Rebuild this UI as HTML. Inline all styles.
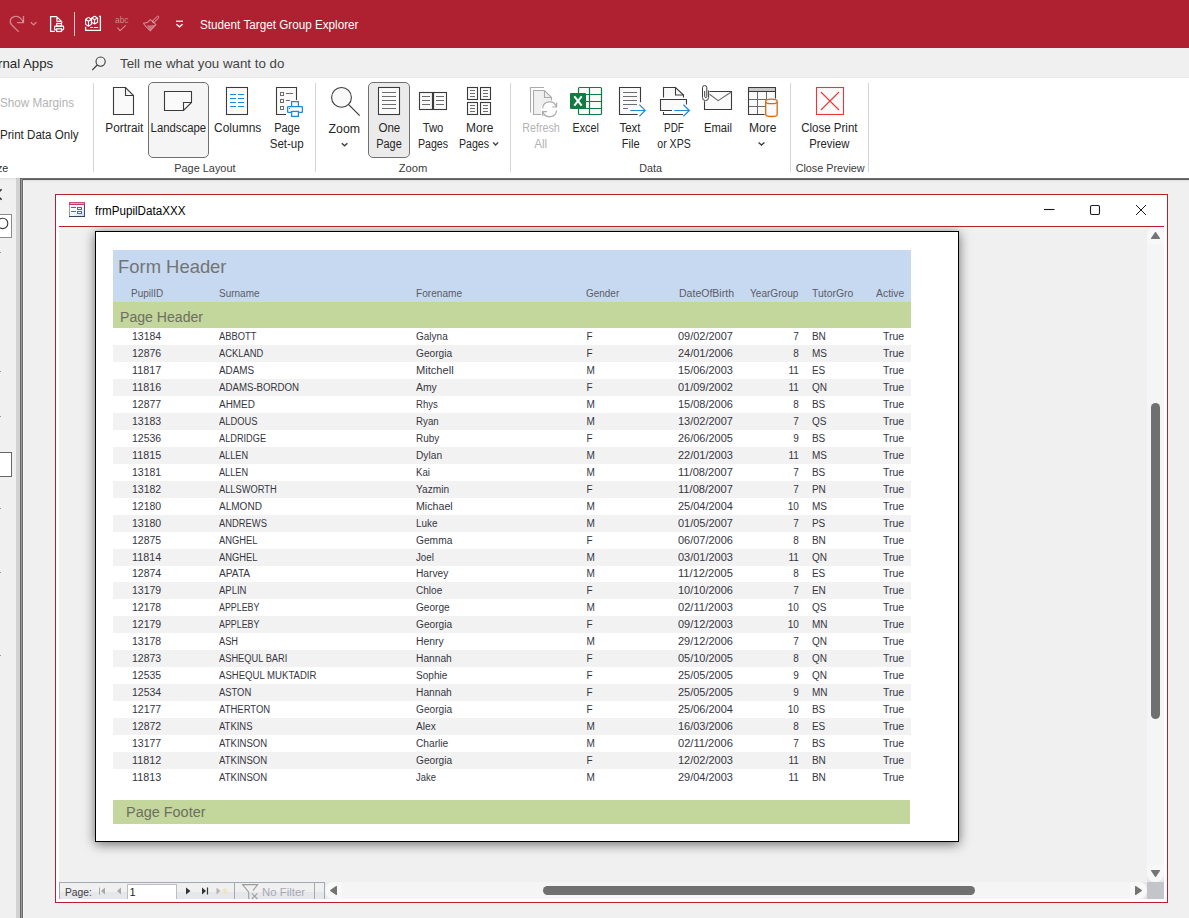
<!DOCTYPE html>
<html><head><meta charset="utf-8"><title>Student Target Group Explorer</title>
<style>
html,body{margin:0;padding:0;}
body{width:1189px;height:918px;overflow:hidden;position:relative;background:#f0f0f0;font-family:"Liberation Sans",sans-serif;}
.t{position:absolute;white-space:pre;line-height:1;}
.r{position:absolute;}
svg{position:absolute;overflow:visible;}
</style></head><body>
<div class="r" style="left:0px;top:0px;width:1189px;height:48px;background:#af2031;"></div>
<span class="t" style="left:200.00px;top:19.00px;font-size:12px;color:#fff;transform:scaleX(0.9751);transform-origin:left top;">Student Target Group Explorer</span>
<div class="r" style="left:0px;top:48px;width:1189px;height:30px;background:#f0f0f0;"></div>
<div class="r" style="left:0px;top:77px;width:1189px;height:1px;background:#e8e8e8;"></div>
<span class="t" style="left:-1.70px;top:57.00px;font-size:13px;color:#262626;transform:scaleX(1.0184);transform-origin:left top;">rnal Apps</span>
<span class="t" style="left:120.20px;top:57.00px;font-size:13px;color:#444;transform:scaleX(1.0248);transform-origin:left top;">Tell me what you want to do</span>
<div class="r" style="left:0px;top:78px;width:1189px;height:100px;background:#fff;"></div>
<div class="r" style="left:20px;top:178px;width:1169px;height:1px;background:#6e6e6e;"></div>
<div class="r" style="left:20px;top:179px;width:1169px;height:1px;background:#5a5a5a;"></div>
<div class="r" style="left:0px;top:178px;width:20px;height:740px;background:#f0f0f0;"></div>
<div class="r" style="left:23px;top:180px;width:1166px;height:738px;background:#f0f0f0;"></div>
<svg style="left:0;top:0" width="200" height="48" viewBox="0 0 200 48" fill="none" stroke-linecap="butt">
<!-- redo (disabled) -->
<path d="M18.8 31.9L11.6 24.7C9.1 22 10 17.6 14.4 16.6C18 15.9 21.2 18.2 23.1 21.9" stroke="rgba(255,255,255,0.46)" stroke-width="1.3"/>
<path d="M23.5 16V22.6H17" stroke="rgba(255,255,255,0.46)" stroke-width="1.3"/>
<path d="M30.8 22.3L33.6 24.9L36.4 22.3" stroke="rgba(255,255,255,0.46)" stroke-width="1.4"/>
<!-- doc + printer -->
<path d="M54.9 31.4H50.6V16.6H56.9" stroke="#fff" stroke-width="1.3"/>
<path d="M56.9 16.9V21.4H61.5Z" stroke="#fff" stroke-width="1.1" stroke-linejoin="bevel"/>
<path d="M61.8 21.4V23" stroke="#fff" stroke-width="1.15"/>
<rect x="56.7" y="23.5" width="4.8" height="2.6" stroke="#fff" stroke-width="1.2"/>
<rect x="54.6" y="26.1" width="9" height="3.7" rx="0.8" stroke="#fff" stroke-width="1.2"/>
<rect x="56.7" y="28.8" width="4.8" height="2.7" fill="#af2031" stroke="#fff" stroke-width="1.2"/>
<!-- separator -->
<path d="M74.5 12V36" stroke="#eac4c9" stroke-width="1"/>
<!-- form icon -->
<path d="M85.6 26.8V30.3H100.4V16.4H99" stroke="#fff" stroke-width="1.3"/>
<path d="M88.5 17.4L91.4 19.2V24.4L88.5 26.3L85.6 24.4V19.2Z M85.6 19.2L88.5 21.2L91.4 19.2 M88.5 21.2V26.3" stroke="#fff" stroke-width="1.1" stroke-linejoin="round"/>
<path d="M94.6 16.2L97.6 17.9V22.3L94.6 24L91.6 22.3V17.9Z M91.6 17.9L94.6 19.7L97.6 17.9 M94.6 19.7V24" stroke="#fff" stroke-width="1.1" stroke-linejoin="round"/>
<path d="M90.3 27.5H92.8M93.8 27.5H98.2" stroke="#fff" stroke-width="1"/>
<!-- abc check disabled -->
<path d="M117.4 27.6L120 30.6L125.8 25.4" stroke="rgba(255,255,255,0.46)" stroke-width="1.1"/>
<!-- brush disabled -->
<path d="M153.6 21.4L157.8 17.2" stroke="rgba(255,255,255,0.46)" stroke-width="3" stroke-linecap="round"/>
<path d="M153.6 21.4L157.8 17.2" stroke="#af2031" stroke-width="1.1" stroke-linecap="round"/>
<path d="M150.4 19.6L156 24.6L150.2 30.8C147.6 28.6 145.2 26 143.4 23.2C146.4 23 148.8 21.8 150.4 19.6Z" stroke="rgba(255,255,255,0.46)" stroke-width="1.1" stroke-linejoin="round"/>
<path d="M146.6 25.4C149.6 25.6 152.6 25 155.6 24.8L150.2 30.6C148.8 29.2 147.6 27.4 146.6 25.4Z" fill="rgba(255,255,255,0.36)" stroke="none"/>
<!-- customize dropdown -->
<path d="M176 21.2H183" stroke="#fff" stroke-width="1.2"/>
<path d="M176.4 24.2L179.5 26.8L182.6 24.2" stroke="#fff" stroke-width="1.3"/>
</svg>
<span class="t" style="left:115.00px;top:16.00px;font-size:9px;color:rgba(255,255,255,0.46);transform:scaleX(0.9303);transform-origin:left top;">abc</span>
<svg style="left:88px;top:52px" width="24" height="24" viewBox="0 0 24 24" fill="none">
<circle cx="12.6" cy="9.6" r="4.6" stroke="#3b3b3b" stroke-width="1.1"/>
<path d="M9.2 13L4.2 18.2" stroke="#3b3b3b" stroke-width="1.2"/>
</svg>
<div class="r" style="left:148px;top:82px;width:61px;height:76px;background:#f5f5f5;box-sizing:border-box;border:1px solid #707070;border-radius:5px;"></div>
<div class="r" style="left:368px;top:82px;width:42px;height:76px;background:#ebebeb;box-sizing:border-box;border:1px solid #707070;border-radius:5px;"></div>
<div class="r" style="left:93px;top:83px;width:1px;height:89px;background:#d5d5d5;"></div>
<div class="r" style="left:315px;top:83px;width:1px;height:89px;background:#d5d5d5;"></div>
<div class="r" style="left:510px;top:83px;width:1px;height:89px;background:#d5d5d5;"></div>
<div class="r" style="left:790px;top:83px;width:1px;height:89px;background:#d5d5d5;"></div>
<div class="r" style="left:868px;top:83px;width:1px;height:89px;background:#d5d5d5;"></div>
<span class="t" style="left:0.30px;top:97.00px;font-size:12px;color:#b3b3b3;transform:scaleX(0.9732);transform-origin:left top;">Show Margins</span>
<span class="t" style="left:0.30px;top:129.00px;font-size:12px;color:#262626;transform:scaleX(0.9660);transform-origin:left top;">Print Data Only</span>
<span class="t" style="left:-3.00px;top:163.00px;font-size:11px;color:#333;transform:scaleX(0.9700);transform-origin:left top;">ze</span>
<span class="t" style="left:174.31px;top:163.00px;font-size:11px;color:#3a3a3a;transform:scaleX(0.9923);transform-origin:center top;">Page Layout</span>
<span class="t" style="left:399.24px;top:163.00px;font-size:11px;color:#3a3a3a;transform:scaleX(1.0171);transform-origin:center top;">Zoom</span>
<span class="t" style="left:639.28px;top:163.00px;font-size:11px;color:#3a3a3a;transform:scaleX(0.9726);transform-origin:center top;">Data</span>
<span class="t" style="left:795.05px;top:163.00px;font-size:11px;color:#3a3a3a;transform:scaleX(0.9814);transform-origin:center top;">Close Preview</span>
<span class="t" style="left:104.56px;top:122.00px;font-size:12px;color:#262626;transform:scaleX(0.9824);transform-origin:center top;">Portrait</span>
<span class="t" style="left:148.94px;top:122.00px;font-size:12px;color:#262626;transform:scaleX(0.9452);transform-origin:center top;">Landscape</span>
<span class="t" style="left:213.72px;top:122.00px;font-size:12px;color:#262626;transform:scaleX(0.9968);transform-origin:center top;">Columns</span>
<span class="t" style="left:273.29px;top:122.00px;font-size:12px;color:#262626;transform:scaleX(0.9170);transform-origin:center top;">Page</span>
<span class="t" style="left:268.82px;top:138.00px;font-size:12px;color:#262626;transform:scaleX(0.9616);transform-origin:center top;">Set-up</span>
<span class="t" style="left:329.36px;top:123.00px;font-size:12px;color:#262626;transform:scaleX(1.0302);transform-origin:center top;">Zoom</span>
<span class="t" style="left:378.16px;top:122.00px;font-size:12px;color:#262626;transform:scaleX(0.9611);transform-origin:center top;">One</span>
<span class="t" style="left:375.39px;top:138.00px;font-size:12px;color:#262626;transform:scaleX(0.9134);transform-origin:center top;">Page</span>
<span class="t" style="left:421.50px;top:122.00px;font-size:12px;color:#262626;transform:scaleX(0.9405);transform-origin:center top;">Two</span>
<span class="t" style="left:415.99px;top:138.00px;font-size:12px;color:#262626;transform:scaleX(0.8875);transform-origin:center top;">Pages</span>
<span class="t" style="left:465.73px;top:122.00px;font-size:12px;color:#262626;transform:scaleX(0.9948);transform-origin:center top;">More</span>
<span class="t" style="left:456.89px;top:138.00px;font-size:12px;color:#262626;transform:scaleX(0.8817);transform-origin:center top;">Pages</span>
<span class="t" style="left:519.59px;top:122.00px;font-size:12px;color:#b3b3b3;transform:scaleX(0.8972);transform-origin:center top;">Refresh</span>
<span class="t" style="left:534.33px;top:138.00px;font-size:12px;color:#b3b3b3;transform:scaleX(0.9747);transform-origin:center top;">All</span>
<span class="t" style="left:570.93px;top:122.00px;font-size:12px;color:#262626;transform:scaleX(0.8928);transform-origin:center top;">Excel</span>
<span class="t" style="left:618.60px;top:122.00px;font-size:12px;color:#262626;transform:scaleX(0.9542);transform-origin:center top;">Text</span>
<span class="t" style="left:620.73px;top:138.00px;font-size:12px;color:#262626;transform:scaleX(0.9205);transform-origin:center top;">File</span>
<span class="t" style="left:661.70px;top:122.00px;font-size:12px;color:#262626;transform:scaleX(0.8250);transform-origin:center top;">PDF</span>
<span class="t" style="left:655.29px;top:138.00px;font-size:12px;color:#262626;transform:scaleX(0.8785);transform-origin:center top;">or XPS</span>
<span class="t" style="left:702.60px;top:122.00px;font-size:12px;color:#262626;transform:scaleX(0.9364);transform-origin:center top;">Email</span>
<span class="t" style="left:748.83px;top:122.00px;font-size:12px;color:#262626;transform:scaleX(1.0058);transform-origin:center top;">More</span>
<span class="t" style="left:800.46px;top:122.00px;font-size:12px;color:#262626;transform:scaleX(0.9593);transform-origin:center top;">Close Print</span>
<span class="t" style="left:808.26px;top:138.00px;font-size:12px;color:#262626;transform:scaleX(0.9372);transform-origin:center top;">Preview</span>
<svg style="left:0;top:0" width="1189" height="180" viewBox="0 0 1189 180"><path d="M113.5 87.5H125.5L133.5 95.5V114.5H113.5Z" fill="#fafafa" stroke="#3b3b3b" stroke-width="1.1" stroke-linejoin="miter"/><path d="M125.5 87.5V95.5H133.5" fill="none" stroke="#3b3b3b" stroke-width="1.1"/><path d="M164.5 91.5H191.5V102.5L183.5 110.5H164.5Z" fill="#fafafa" stroke="#3b3b3b" stroke-width="1.1"/><path d="M191.5 102.5H183.5V110.5" fill="none" stroke="#3b3b3b" stroke-width="1.1"/><rect x="226.5" y="87.5" width="21" height="27" fill="#fff" stroke="#3b3b3b" stroke-width="1.1"/><rect x="228.5" y="89.5" width="17" height="23" fill="#fafafa"/><path d="M230 94.5H236M238 94.5H244" stroke="#1e8ad6" stroke-width="1.1"/><path d="M230 98.5H236M238 98.5H244" stroke="#1e8ad6" stroke-width="1.1"/><path d="M230 102.5H236M238 102.5H244" stroke="#1e8ad6" stroke-width="1.1"/><path d="M230 106.5H236M238 106.5H244" stroke="#1e8ad6" stroke-width="1.1"/><path d="M277 88H296V101H287V114H277Z" fill="#fafafa" stroke="none"/><path d="M286 114.5H276.5V87.5H296.5V100" fill="none" stroke="#3b3b3b" stroke-width="1.1"/><rect x="280.5" y="92.5" width="3" height="3" fill="#fff" stroke="#6d6d6d" stroke-width="1"/><rect x="280.5" y="99.5" width="3" height="3" fill="#fff" stroke="#6d6d6d" stroke-width="1"/><rect x="280.5" y="106.5" width="3" height="3" fill="#fff" stroke="#6d6d6d" stroke-width="1"/><path d="M286 93.5H293M286 100.5H290" stroke="#6d6d6d" stroke-width="1"/><rect x="291.6" y="101.6" width="6.8" height="5" fill="#fafafa" stroke="#1e8ad6" stroke-width="1.25"/><rect x="287.6" y="106.6" width="14.8" height="5.8" rx="0.6" fill="#fafafa" stroke="#1e8ad6" stroke-width="1.25"/><rect x="291.6" y="111.4" width="6.8" height="5" fill="#fafafa" stroke="#1e8ad6" stroke-width="1.25"/><rect x="289" y="108" width="1" height="1" fill="#1e8ad6"/><circle cx="341.5" cy="97.4" r="9.9" fill="#fafafa" stroke="#3b3b3b" stroke-width="1.1"/><path d="M348.7 104.6L359.7 115.6" stroke="#3b3b3b" stroke-width="1.2"/><path d="M341.8 143.2L344.6 145.8L347.4 143.2" fill="none" stroke="#3b3b3b" stroke-width="1.3"/><rect x="378.5" y="87.5" width="21" height="27" fill="#fff" stroke="#3b3b3b" stroke-width="1.1"/><rect x="380.5" y="89.5" width="17" height="23" fill="#fafafa"/><path d="M382 92.5H396" stroke="#6d6d6d" stroke-width="1"/><path d="M382 96.5H396" stroke="#6d6d6d" stroke-width="1"/><path d="M382 100.5H396" stroke="#6d6d6d" stroke-width="1"/><path d="M382 104.5H396" stroke="#6d6d6d" stroke-width="1"/><path d="M382 108.5H396" stroke="#6d6d6d" stroke-width="1"/><rect x="419.5" y="92.5" width="27" height="17" fill="#fafafa" stroke="#3b3b3b" stroke-width="1.1"/><path d="M433 92.5V109.5" stroke="#3b3b3b" stroke-width="2.2"/><path d="M422 96.5H430M436 96.5H444" stroke="#6d6d6d" stroke-width="1"/><path d="M422 100.5H430M436 100.5H444" stroke="#6d6d6d" stroke-width="1"/><path d="M422 104.5H430M436 104.5H444" stroke="#6d6d6d" stroke-width="1"/><rect x="467.5" y="87.5" width="10" height="12" fill="#fafafa" stroke="#3b3b3b" stroke-width="1.1"/><path d="M470.0 90.5H475.0" stroke="#6d6d6d" stroke-width="1"/><path d="M470.0 93.5H475.0" stroke="#6d6d6d" stroke-width="1"/><path d="M470.0 96.5H475.0" stroke="#6d6d6d" stroke-width="1"/><rect x="480.5" y="87.5" width="10" height="12" fill="#fafafa" stroke="#3b3b3b" stroke-width="1.1"/><path d="M483.0 90.5H488.0" stroke="#6d6d6d" stroke-width="1"/><path d="M483.0 93.5H488.0" stroke="#6d6d6d" stroke-width="1"/><path d="M483.0 96.5H488.0" stroke="#6d6d6d" stroke-width="1"/><rect x="467.5" y="102.5" width="10" height="12" fill="#fafafa" stroke="#3b3b3b" stroke-width="1.1"/><path d="M470.0 105.5H475.0" stroke="#6d6d6d" stroke-width="1"/><path d="M470.0 108.5H475.0" stroke="#6d6d6d" stroke-width="1"/><path d="M470.0 111.5H475.0" stroke="#6d6d6d" stroke-width="1"/><rect x="480.5" y="102.5" width="10" height="12" fill="#fafafa" stroke="#3b3b3b" stroke-width="1.1"/><path d="M483.0 105.5H488.0" stroke="#6d6d6d" stroke-width="1"/><path d="M483.0 108.5H488.0" stroke="#6d6d6d" stroke-width="1"/><path d="M483.0 111.5H488.0" stroke="#6d6d6d" stroke-width="1"/><path d="M493 142.4L495.6 145L498.2 142.4" fill="none" stroke="#3b3b3b" stroke-width="1.3"/><path d="M530.5 112.6V87.5H544" fill="none" stroke="#ababab" stroke-width="1.1"/><path d="M534 91H544.4L551 97.6V114H534Z" fill="#f0f0f0" stroke="none"/><path d="M541 114.5H533.5V90.5H544.5L551.5 97.5V100.4" fill="none" stroke="#ababab" stroke-width="1.1"/><path d="M544.5 90.5V97.5H551.5" fill="none" stroke="#ababab" stroke-width="1.1"/><circle cx="549.6" cy="109.3" r="8.6" fill="#fff" stroke="none"/><path d="M542.6 108.2A7 7 0 0 1 556.2 106.6" fill="none" stroke="#ababab" stroke-width="1.2"/><path d="M556.6 110.4A7 7 0 0 1 543 112" fill="none" stroke="#ababab" stroke-width="1.2"/><path d="M556.6 102.6V107H552.2" fill="none" stroke="#ababab" stroke-width="1.2"/><path d="M542.6 116V111.6H547" fill="none" stroke="#ababab" stroke-width="1.2"/><rect x="578.5" y="87.5" width="23" height="27" rx="1" fill="#fafafa" stroke="#107c41" stroke-width="1.2"/><path d="M589.5 87.5V114.5M578.5 94.5H601.5M578.5 101.5H601.5M578.5 108.5H601.5" stroke="#107c41" stroke-width="1.2" fill="none"/><rect x="570" y="93" width="16" height="16" rx="1" fill="#107c41"/><path d="M574.3 96.4L581.7 105.7M581.7 96.4L574.3 105.7" stroke="#fff" stroke-width="2.1" fill="none"/><path d="M620 88H640V104H637V114H620Z" fill="#fafafa" stroke="none"/><path d="M637.7 114.5H619.5V87.5H640.5V102.3" fill="none" stroke="#3b3b3b" stroke-width="1.1"/><path d="M623 92.5H637" stroke="#6d6d6d" stroke-width="1"/><path d="M623 96.5H637" stroke="#6d6d6d" stroke-width="1"/><path d="M623 100.5H637" stroke="#6d6d6d" stroke-width="1"/><path d="M623 104.5H637" stroke="#6d6d6d" stroke-width="1"/><path d="M623 108.5H628" stroke="#6d6d6d" stroke-width="1"/><path d="M630.3 110.5H645M639.4 104.7L645.2 110.5L639.4 116.3" fill="none" stroke="#1e8ad6" stroke-width="1.2"/><path d="M663.5 97.5V87.5H675.5L683.5 95V97.5" fill="#fafafa" stroke="#3b3b3b" stroke-width="1.1"/><path d="M675.5 87.5V95H683.5" fill="none" stroke="#3b3b3b" stroke-width="1.1"/><path d="M661 100H686V106H674V110H661Z" fill="#fafafa" stroke="none"/><path d="M672 110.5H660.5V99.5H686.5V104.6" fill="none" stroke="#3b3b3b" stroke-width="1.1"/><path d="M663.5 112V114.5H683" fill="none" stroke="#3b3b3b" stroke-width="1.1"/><path d="M674.2 110.5H689.2M683.4 104.7L689.4 110.5L683.4 116.3" fill="none" stroke="#1e8ad6" stroke-width="1.2"/><path d="M705 101H709V92H731V109H705Z" fill="#fafafa" stroke="none"/><path d="M709.5 91.5H731.5V109.5H704.5V101.2" fill="none" stroke="#3b3b3b" stroke-width="1.1"/><path d="M709.6 94.2L718.1 100.6L731.3 92" fill="none" stroke="#6d6d6d" stroke-width="1.1"/><path d="M702.5 97.4V88A2.9 2.9 0 0 1 708.3 88V97.6A2.9 2.9 0 0 1 702.5 97.6Z" fill="#fff" stroke="none"/><path d="M708.6 90.4V97.5A3.05 3.05 0 0 1 702.5 97.5V87.7A2.15 2.15 0 0 1 706.8 87.7V96.5A1.05 1.05 0 0 1 704.7 96.5V91" fill="none" stroke="#3b3b3b" stroke-width="1"/><rect x="748.5" y="87.5" width="27" height="27" fill="#fafafa" stroke="none"/><rect x="748.5" y="87.5" width="27" height="3.5" fill="#c8c8c8" stroke="none"/><path d="M757.5 91.5V114M766.5 91.5V100M748.5 99.5H766M748.5 106.5H766" stroke="#6d6d6d" stroke-width="1" fill="none"/><path d="M764.6 114.5H748.5V87.5H775.5V98.6M748.5 91.5H775.5" fill="none" stroke="#3b3b3b" stroke-width="1.1"/><path d="M765.7 101.4V114.4C765.7 117.2 777.2 117.2 777.2 114.4V101.4" fill="#fafafa" stroke="#d86a0d" stroke-width="1.3"/><ellipse cx="771.45" cy="101.4" rx="5.75" ry="2.2" fill="#fafafa" stroke="#d86a0d" stroke-width="1.3"/><path d="M758.6 142.4L761.5 145.1L764.4 142.4" fill="none" stroke="#3b3b3b" stroke-width="1.3"/><rect x="816.5" y="87.5" width="27" height="27" fill="#fafafa" stroke="#e8373a" stroke-width="1.1"/><path d="M820.9 92L839 110M839 92L820.9 110" stroke="#e8373a" stroke-width="1.1" fill="none"/></svg>
<div class="r" style="left:0px;top:178px;width:20px;height:1px;background:#e2e2e2;"></div>
<div class="r" style="left:0px;top:179px;width:20px;height:1px;background:#e9e9e9;"></div>
<div class="r" style="left:0px;top:180px;width:20px;height:1px;background:#eeeeee;"></div>
<div class="r" style="left:16px;top:178px;width:4px;height:740px;background:#d2d2d2;"></div>
<div class="r" style="left:16px;top:178px;width:4px;height:1px;background:#c8c8c8;"></div>
<div class="r" style="left:20px;top:178px;width:1px;height:740px;background:#656565;"></div>
<div class="r" style="left:21px;top:179px;width:1px;height:739px;background:#9c9c9c;"></div>
<div class="r" style="left:22px;top:179px;width:1px;height:739px;background:#696969;"></div>
<div class="r" style="left:23px;top:180px;width:1px;height:738px;background:#f8f8f8;"></div>
<div class="r" style="left:23px;top:180px;width:1166px;height:1px;background:#e4e4e4;"></div>
<div class="r" style="left:24px;top:181px;width:1165px;height:1px;background:#ebebeb;"></div>
<div class="r" style="left:24px;top:182px;width:1165px;height:1px;background:#eeeeee;"></div>
<svg style="left:0;top:186px" width="8" height="16" viewBox="0 0 8 16"><path d="M1.6 3.2L-3.8 8.5L1.6 13.8" fill="none" stroke="#333" stroke-width="1.6"/></svg>
<div class="r" style="left:-1px;top:214px;width:13px;height:24px;background:#fff;box-sizing:border-box;border:1px solid #8a8a8a;"></div>
<svg style="left:0;top:214px" width="12" height="24" viewBox="0 0 12 24"><circle cx="2.6" cy="9.4" r="5.2" fill="none" stroke="#3a3a3a" stroke-width="1.1"/></svg>
<div class="r" style="left:-1px;top:452px;width:13px;height:25px;background:#fff;box-sizing:border-box;border:1px solid #666;"></div>
<div class="r" style="left:0px;top:252px;width:1px;height:1px;background:#9a9a9a;"></div>
<div class="r" style="left:0px;top:371px;width:1px;height:1px;background:#9a9a9a;"></div>
<div class="r" style="left:0px;top:416px;width:1px;height:1px;background:#9a9a9a;"></div>
<div class="r" style="left:0px;top:508px;width:1px;height:1px;background:#9a9a9a;"></div>
<div class="r" style="left:0px;top:572px;width:1px;height:1px;background:#9a9a9a;"></div>
<div class="r" style="left:0px;top:655px;width:1px;height:1px;background:#9a9a9a;"></div>
<div class="r" style="left:55px;top:194px;width:1113px;height:709px;background:#fff;box-sizing:border-box;border:1px solid #b5212f;"></div>
<div class="r" style="left:59px;top:226px;width:1105px;height:1px;background:#b5212f;"></div>
<div class="r" style="left:59px;top:227px;width:1105px;height:655px;background:#f0f0f0;"></div>
<span class="t" style="left:95.00px;top:205.00px;font-size:12px;color:#000;transform:scaleX(0.9682);transform-origin:left top;">frmPupilDataXXX</span>
<svg style="left:69px;top:202px" width="16" height="15" viewBox="0 0 16 15" shape-rendering="crispEdges">
<defs><linearGradient id="fg" x1="0" y1="0" x2="1" y2="1"><stop offset="0" stop-color="#ffffff"/><stop offset="0.5" stop-color="#f4f8ff"/><stop offset="1" stop-color="#c4d4f6"/></linearGradient></defs>
<rect x="0" y="3" width="16" height="12" fill="url(#fg)"/>
<rect x="0" y="0" width="16" height="3" fill="#c4366c"/>
<rect x="1" y="1" width="14" height="1" fill="#e9a4bd"/>
<rect x="0" y="0" width="16" height="1" fill="#cf4e80"/>
<rect x="0" y="3" width="1" height="12" fill="#8d9cba"/>
<rect x="15" y="3" width="1" height="12" fill="#3a4c74"/>
<rect x="0" y="14" width="16" height="1" fill="#2f4468"/>
<rect x="2" y="5" width="5" height="1" fill="#5068a8"/>
<rect x="2" y="9" width="5" height="1" fill="#5068a8"/>
<rect x="8" y="5" width="5" height="3" fill="#5c6a92"/>
<rect x="9" y="6" width="3" height="1" fill="#f4f6fc"/>
<rect x="8" y="9" width="5" height="3" fill="#5c6a92"/>
<rect x="9" y="10" width="3" height="1" fill="#f4f6fc"/>
</svg>
<svg style="left:1040px;top:200px" width="120" height="20" viewBox="0 0 120 20"><path d="M4 9.5H14.5" stroke="#1a1a1a" stroke-width="1.1" fill="none"/><rect x="50.5" y="5.5" width="9" height="9" rx="1.5" fill="none" stroke="#1a1a1a" stroke-width="1.1"/><path d="M96 5L106 15M106 5L96 15" stroke="#1a1a1a" stroke-width="1" fill="none"/></svg>
<div class="r" style="left:1147px;top:227px;width:17px;height:655px;background:#f5f5f5;"></div>
<div class="r" style="left:1147px;top:227px;width:17px;height:9px;background:#efefef;"></div>
<div class="r" style="left:1147px;top:227px;width:17px;height:17px;background:#f8f8f8;border-radius:8px 8px 0 0;"></div>
<div class="r" style="left:1147px;top:873px;width:17px;height:9px;background:#e6e6e8;"></div>
<div class="r" style="left:1147px;top:865px;width:17px;height:17px;background:#f8f8f8;border-radius:0 0 8px 8px;"></div>
<div class="r" style="left:1151px;top:403px;width:9px;height:316px;background:#707070;border-radius:4.5px;"></div>
<svg style="left:1147px;top:227px" width="17" height="17" viewBox="0 0 17 17"><path d="M4.6 11.4L8.5 5.6L12.4 11.4Z" fill="#757575" stroke="#757575" stroke-width="1.2" stroke-linejoin="round"/></svg>
<svg style="left:1147px;top:865px" width="17" height="17" viewBox="0 0 17 17"><path d="M4.6 5.6L8.5 11.4L12.4 5.6Z" fill="#757575" stroke="#757575" stroke-width="1.2" stroke-linejoin="round"/></svg>
<div class="r" style="left:325px;top:882px;width:822px;height:17px;background:#f5f5f5;"></div>
<div class="r" style="left:325px;top:882px;width:8px;height:17px;background:#e9eaec;"></div>
<div class="r" style="left:325px;top:882px;width:17px;height:17px;background:#f8f8f8;border-radius:8px 0 0 8px;"></div>
<div class="r" style="left:1138px;top:882px;width:9px;height:17px;background:#e6e6e8;"></div>
<div class="r" style="left:1130px;top:882px;width:17px;height:17px;background:#f8f8f8;border-radius:0 8px 8px 0;"></div>
<div class="r" style="left:543px;top:886px;width:432px;height:9px;background:#707070;border-radius:4.5px;"></div>
<svg style="left:325px;top:882px" width="17" height="17" viewBox="0 0 17 17"><path d="M11.4 4.6L5.6 8.5L11.4 12.4Z" fill="#757575" stroke="#757575" stroke-width="1.2" stroke-linejoin="round"/></svg>
<svg style="left:1130px;top:882px" width="17" height="17" viewBox="0 0 17 17"><path d="M5.6 4.6L11.4 8.5L5.6 12.4Z" fill="#757575" stroke="#757575" stroke-width="1.2" stroke-linejoin="round"/></svg>
<div class="r" style="left:1147px;top:882px;width:17px;height:17px;background:#c4c5c9;"></div>
<div class="r" style="left:59px;top:882px;width:266px;height:17px;background:#f0f0f0;"></div>
<div class="r" style="left:60px;top:892px;width:264px;height:7px;background:#e5e7ea;"></div>
<div class="r" style="left:59px;top:882px;width:266px;height:1px;background:#a3a9b3;"></div>
<div class="r" style="left:59px;top:882px;width:1px;height:17px;background:#a3a9b3;"></div>
<div class="r" style="left:324px;top:882px;width:1px;height:17px;background:#a3a9b3;"></div>
<span class="t" style="left:64.50px;top:887.00px;font-size:11px;color:#3c3c46;transform:scaleX(0.9323);transform-origin:left top;">Page:</span>
<svg style="left:95px;top:884.4px" width="140" height="14" viewBox="0 0 140 14"><path d="M4.5 3.5V10.5" stroke="#a9a9a9" stroke-width="1"/><path d="M10 3.5L6 7L10 10.5Z" fill="#a9a9a9"/><path d="M26 3.5L22 7L26 10.5Z" fill="#a9a9a9"/><path d="M91 3.5L95.5 7L91 10.5Z" fill="#333"/><path d="M107 3.5L111 7L107 10.5Z" fill="#333"/><path d="M112.5 3.5V10.5" stroke="#333" stroke-width="1.2"/><path d="M121.5 3.5L125.5 7L121.5 10.5Z" fill="#b4b4b4"/><path d="M130 4v6M127 7h6M128 5l4 4M132 5l-4 4" stroke="#f1e1b4" stroke-width="1"/></svg>
<div class="r" style="left:127px;top:884px;width:50px;height:15px;background:#fff;box-sizing:border-box;border:1px solid #b9bdc4;border-bottom:none;"></div>
<span class="t" style="left:129.60px;top:887.00px;font-size:11px;color:#1a1a2a;transform:scaleX(1.0000);transform-origin:left top;">1</span>
<div class="r" style="left:234px;top:883px;width:1px;height:16px;background:#a3a9b3;"></div>
<div class="r" style="left:314px;top:883px;width:1px;height:16px;background:#a3a9b3;"></div>
<svg style="left:241px;top:883px" width="20" height="16" viewBox="0 0 20 16"><path d="M7.7 16V9.2L1.6 1.6H16.6L12 7.6" fill="none" stroke="#9c9c9c" stroke-width="1.1"/><path d="M10.8 10.3L16.4 16M16.4 10.3L10.8 16" stroke="#9c9c9c" stroke-width="1.1"/></svg>
<span class="t" style="left:261.50px;top:887.00px;font-size:11px;color:#a7a7b5;transform:scaleX(1.0346);transform-origin:left top;">No Filter</span>
<div class="r" style="left:59px;top:227px;width:1088px;height:655px;overflow:hidden"><div class="r" style="left:36px;top:4px;width:864px;height:611px;background:#fff;box-sizing:border-box;border:1px solid #000;box-shadow:0 2px 11px 0 rgba(0,0,0,0.56);"></div></div>
<div class="r" style="left:113px;top:250px;width:798px;height:52px;background:#c6d9f0;"></div>
<div class="r" style="left:113px;top:302px;width:798px;height:26px;background:#c3d69b;"></div>
<div class="r" style="left:113px;top:800px;width:797px;height:24px;background:#c3d69b;"></div>
<span class="t" style="left:117.50px;top:258.00px;font-size:18.5px;color:#747474;transform:scaleX(0.9956);transform-origin:left top;">Form Header</span>
<span class="t" style="left:120.30px;top:310.00px;font-size:14px;color:#6e6e62;transform:scaleX(1.0060);transform-origin:left top;">Page Header</span>
<span class="t" style="left:125.60px;top:805.00px;font-size:14px;color:#6e6e62;transform:scaleX(1.0318);transform-origin:left top;">Page Footer</span>
<span class="t" style="left:131.40px;top:289.00px;font-size:10px;color:#5c5c66;transform:scaleX(0.9988);transform-origin:left top;">PupilID</span>
<span class="t" style="left:219.00px;top:289.00px;font-size:10px;color:#5c5c66;transform:scaleX(0.9981);transform-origin:left top;">Surname</span>
<span class="t" style="left:416.30px;top:289.00px;font-size:10px;color:#5c5c66;transform:scaleX(1.0136);transform-origin:left top;">Forename</span>
<span class="t" style="left:586.30px;top:289.00px;font-size:10px;color:#5c5c66;transform:scaleX(0.9953);transform-origin:left top;">Gender</span>
<span class="t" style="left:678.50px;top:289.00px;font-size:10px;color:#5c5c66;transform:scaleX(1.0528);transform-origin:left top;">DateOfBirth</span>
<span class="t" style="left:750.40px;top:289.00px;font-size:10px;color:#5c5c66;transform:scaleX(1.0083);transform-origin:left top;">YearGroup</span>
<span class="t" style="left:812.20px;top:289.00px;font-size:10px;color:#5c5c66;transform:scaleX(1.0419);transform-origin:left top;">TutorGro</span>
<span class="t" style="left:876.00px;top:289.00px;font-size:10px;color:#5c5c66;transform:scaleX(1.0392);transform-origin:left top;">Active</span>
<span class="t" style="left:131.90px;top:332.00px;font-size:10px;color:#36363f;transform:scaleX(1.0477);transform-origin:left top;">13184</span>
<span class="t" style="left:219.20px;top:332.00px;font-size:10px;color:#36363f;transform:scaleX(0.9380);transform-origin:left top;">ABBOTT</span>
<span class="t" style="left:416.20px;top:332.00px;font-size:10px;color:#36363f;transform:scaleX(1.0004);transform-origin:left top;">Galyna</span>
<span class="t" style="left:586.50px;top:332.00px;font-size:10px;color:#36363f;transform:scaleX(1.0000);transform-origin:left top;">F</span>
<span class="t" style="left:678.30px;top:332.00px;font-size:10px;color:#36363f;transform:scaleX(1.0958);transform-origin:left top;">09/02/2007</span>
<span class="t" style="left:793.34px;top:332.00px;font-size:10px;color:#36363f;transform:scaleX(1.0000);transform-origin:right top;">7</span>
<span class="t" style="left:811.90px;top:332.00px;font-size:10px;color:#36363f;transform:scaleX(1.0000);transform-origin:left top;">BN</span>
<span class="t" style="left:884.31px;top:332.00px;font-size:10px;color:#36363f;transform:scaleX(1.0500);transform-origin:right top;">True</span>
<div class="r" style="left:113px;top:345px;width:798px;height:17px;background:#f2f2f2;"></div>
<span class="t" style="left:131.90px;top:349.00px;font-size:10px;color:#36363f;transform:scaleX(1.0477);transform-origin:left top;">12876</span>
<span class="t" style="left:219.20px;top:349.00px;font-size:10px;color:#36363f;transform:scaleX(0.9350);transform-origin:left top;">ACKLAND</span>
<span class="t" style="left:416.20px;top:349.00px;font-size:10px;color:#36363f;transform:scaleX(1.0140);transform-origin:left top;">Georgia</span>
<span class="t" style="left:586.50px;top:349.00px;font-size:10px;color:#36363f;transform:scaleX(1.0000);transform-origin:left top;">F</span>
<span class="t" style="left:678.30px;top:349.00px;font-size:10px;color:#36363f;transform:scaleX(1.0958);transform-origin:left top;">24/01/2006</span>
<span class="t" style="left:793.34px;top:349.00px;font-size:10px;color:#36363f;transform:scaleX(1.0000);transform-origin:right top;">8</span>
<span class="t" style="left:811.90px;top:349.00px;font-size:10px;color:#36363f;transform:scaleX(1.0000);transform-origin:left top;">MS</span>
<span class="t" style="left:884.31px;top:349.00px;font-size:10px;color:#36363f;transform:scaleX(1.0500);transform-origin:right top;">True</span>
<span class="t" style="left:131.90px;top:366.00px;font-size:10px;color:#36363f;transform:scaleX(1.0765);transform-origin:left top;">11817</span>
<span class="t" style="left:219.20px;top:366.00px;font-size:10px;color:#36363f;transform:scaleX(0.9865);transform-origin:left top;">ADAMS</span>
<span class="t" style="left:416.20px;top:366.00px;font-size:10px;color:#36363f;transform:scaleX(1.1111);transform-origin:left top;">Mitchell</span>
<span class="t" style="left:586.50px;top:366.00px;font-size:10px;color:#36363f;transform:scaleX(1.0000);transform-origin:left top;">M</span>
<span class="t" style="left:678.30px;top:366.00px;font-size:10px;color:#36363f;transform:scaleX(1.0958);transform-origin:left top;">15/06/2003</span>
<span class="t" style="left:788.52px;top:366.00px;font-size:10px;color:#36363f;transform:scaleX(1.0000);transform-origin:right top;">11</span>
<span class="t" style="left:811.90px;top:366.00px;font-size:10px;color:#36363f;transform:scaleX(1.0000);transform-origin:left top;">ES</span>
<span class="t" style="left:884.31px;top:366.00px;font-size:10px;color:#36363f;transform:scaleX(1.0500);transform-origin:right top;">True</span>
<div class="r" style="left:113px;top:379px;width:798px;height:17px;background:#f2f2f2;"></div>
<span class="t" style="left:131.90px;top:383.00px;font-size:10px;color:#36363f;transform:scaleX(1.0765);transform-origin:left top;">11816</span>
<span class="t" style="left:219.20px;top:383.00px;font-size:10px;color:#36363f;transform:scaleX(0.9668);transform-origin:left top;">ADAMS-BORDON</span>
<span class="t" style="left:416.20px;top:383.00px;font-size:10px;color:#36363f;transform:scaleX(1.0390);transform-origin:left top;">Amy</span>
<span class="t" style="left:586.50px;top:383.00px;font-size:10px;color:#36363f;transform:scaleX(1.0000);transform-origin:left top;">F</span>
<span class="t" style="left:678.30px;top:383.00px;font-size:10px;color:#36363f;transform:scaleX(1.0958);transform-origin:left top;">01/09/2002</span>
<span class="t" style="left:788.52px;top:383.00px;font-size:10px;color:#36363f;transform:scaleX(1.0000);transform-origin:right top;">11</span>
<span class="t" style="left:811.90px;top:383.00px;font-size:10px;color:#36363f;transform:scaleX(1.0000);transform-origin:left top;">QN</span>
<span class="t" style="left:884.31px;top:383.00px;font-size:10px;color:#36363f;transform:scaleX(1.0500);transform-origin:right top;">True</span>
<span class="t" style="left:131.90px;top:400.00px;font-size:10px;color:#36363f;transform:scaleX(1.0477);transform-origin:left top;">12877</span>
<span class="t" style="left:219.20px;top:400.00px;font-size:10px;color:#36363f;transform:scaleX(0.9943);transform-origin:left top;">AHMED</span>
<span class="t" style="left:416.20px;top:400.00px;font-size:10px;color:#36363f;transform:scaleX(0.9527);transform-origin:left top;">Rhys</span>
<span class="t" style="left:586.50px;top:400.00px;font-size:10px;color:#36363f;transform:scaleX(1.0000);transform-origin:left top;">M</span>
<span class="t" style="left:678.30px;top:400.00px;font-size:10px;color:#36363f;transform:scaleX(1.0958);transform-origin:left top;">15/08/2006</span>
<span class="t" style="left:793.34px;top:400.00px;font-size:10px;color:#36363f;transform:scaleX(1.0000);transform-origin:right top;">8</span>
<span class="t" style="left:811.90px;top:400.00px;font-size:10px;color:#36363f;transform:scaleX(1.0000);transform-origin:left top;">BS</span>
<span class="t" style="left:884.31px;top:400.00px;font-size:10px;color:#36363f;transform:scaleX(1.0500);transform-origin:right top;">True</span>
<div class="r" style="left:113px;top:413px;width:798px;height:17px;background:#f2f2f2;"></div>
<span class="t" style="left:131.90px;top:417.00px;font-size:10px;color:#36363f;transform:scaleX(1.0477);transform-origin:left top;">13183</span>
<span class="t" style="left:219.20px;top:417.00px;font-size:10px;color:#36363f;transform:scaleX(0.9329);transform-origin:left top;">ALDOUS</span>
<span class="t" style="left:416.20px;top:417.00px;font-size:10px;color:#36363f;transform:scaleX(0.9724);transform-origin:left top;">Ryan</span>
<span class="t" style="left:586.50px;top:417.00px;font-size:10px;color:#36363f;transform:scaleX(1.0000);transform-origin:left top;">M</span>
<span class="t" style="left:678.30px;top:417.00px;font-size:10px;color:#36363f;transform:scaleX(1.0958);transform-origin:left top;">13/02/2007</span>
<span class="t" style="left:793.34px;top:417.00px;font-size:10px;color:#36363f;transform:scaleX(1.0000);transform-origin:right top;">7</span>
<span class="t" style="left:811.90px;top:417.00px;font-size:10px;color:#36363f;transform:scaleX(1.0000);transform-origin:left top;">QS</span>
<span class="t" style="left:884.31px;top:417.00px;font-size:10px;color:#36363f;transform:scaleX(1.0500);transform-origin:right top;">True</span>
<span class="t" style="left:131.90px;top:434.00px;font-size:10px;color:#36363f;transform:scaleX(1.0477);transform-origin:left top;">12536</span>
<span class="t" style="left:219.20px;top:434.00px;font-size:10px;color:#36363f;transform:scaleX(0.9198);transform-origin:left top;">ALDRIDGE</span>
<span class="t" style="left:416.20px;top:434.00px;font-size:10px;color:#36363f;transform:scaleX(0.9948);transform-origin:left top;">Ruby</span>
<span class="t" style="left:586.50px;top:434.00px;font-size:10px;color:#36363f;transform:scaleX(1.0000);transform-origin:left top;">F</span>
<span class="t" style="left:678.30px;top:434.00px;font-size:10px;color:#36363f;transform:scaleX(1.0958);transform-origin:left top;">26/06/2005</span>
<span class="t" style="left:793.34px;top:434.00px;font-size:10px;color:#36363f;transform:scaleX(1.0000);transform-origin:right top;">9</span>
<span class="t" style="left:811.90px;top:434.00px;font-size:10px;color:#36363f;transform:scaleX(1.0000);transform-origin:left top;">BS</span>
<span class="t" style="left:884.31px;top:434.00px;font-size:10px;color:#36363f;transform:scaleX(1.0500);transform-origin:right top;">True</span>
<div class="r" style="left:113px;top:447px;width:798px;height:17px;background:#f2f2f2;"></div>
<span class="t" style="left:131.90px;top:451.00px;font-size:10px;color:#36363f;transform:scaleX(1.0765);transform-origin:left top;">11815</span>
<span class="t" style="left:219.20px;top:451.00px;font-size:10px;color:#36363f;transform:scaleX(0.9169);transform-origin:left top;">ALLEN</span>
<span class="t" style="left:416.20px;top:451.00px;font-size:10px;color:#36363f;transform:scaleX(1.0212);transform-origin:left top;">Dylan</span>
<span class="t" style="left:586.50px;top:451.00px;font-size:10px;color:#36363f;transform:scaleX(1.0000);transform-origin:left top;">M</span>
<span class="t" style="left:678.30px;top:451.00px;font-size:10px;color:#36363f;transform:scaleX(1.0958);transform-origin:left top;">22/01/2003</span>
<span class="t" style="left:788.52px;top:451.00px;font-size:10px;color:#36363f;transform:scaleX(1.0000);transform-origin:right top;">11</span>
<span class="t" style="left:811.90px;top:451.00px;font-size:10px;color:#36363f;transform:scaleX(1.0000);transform-origin:left top;">MS</span>
<span class="t" style="left:884.31px;top:451.00px;font-size:10px;color:#36363f;transform:scaleX(1.0500);transform-origin:right top;">True</span>
<span class="t" style="left:131.90px;top:468.00px;font-size:10px;color:#36363f;transform:scaleX(1.0477);transform-origin:left top;">13181</span>
<span class="t" style="left:219.20px;top:468.00px;font-size:10px;color:#36363f;transform:scaleX(0.9169);transform-origin:left top;">ALLEN</span>
<span class="t" style="left:416.20px;top:468.00px;font-size:10px;color:#36363f;transform:scaleX(0.9670);transform-origin:left top;">Kai</span>
<span class="t" style="left:586.50px;top:468.00px;font-size:10px;color:#36363f;transform:scaleX(1.0000);transform-origin:left top;">M</span>
<span class="t" style="left:678.30px;top:468.00px;font-size:10px;color:#36363f;transform:scaleX(1.1123);transform-origin:left top;">11/08/2007</span>
<span class="t" style="left:793.34px;top:468.00px;font-size:10px;color:#36363f;transform:scaleX(1.0000);transform-origin:right top;">7</span>
<span class="t" style="left:811.90px;top:468.00px;font-size:10px;color:#36363f;transform:scaleX(1.0000);transform-origin:left top;">BS</span>
<span class="t" style="left:884.31px;top:468.00px;font-size:10px;color:#36363f;transform:scaleX(1.0500);transform-origin:right top;">True</span>
<div class="r" style="left:113px;top:481px;width:798px;height:17px;background:#f2f2f2;"></div>
<span class="t" style="left:131.90px;top:485.00px;font-size:10px;color:#36363f;transform:scaleX(1.0477);transform-origin:left top;">13182</span>
<span class="t" style="left:219.20px;top:485.00px;font-size:10px;color:#36363f;transform:scaleX(0.9290);transform-origin:left top;">ALLSWORTH</span>
<span class="t" style="left:416.20px;top:485.00px;font-size:10px;color:#36363f;transform:scaleX(1.0134);transform-origin:left top;">Yazmin</span>
<span class="t" style="left:586.50px;top:485.00px;font-size:10px;color:#36363f;transform:scaleX(1.0000);transform-origin:left top;">F</span>
<span class="t" style="left:678.30px;top:485.00px;font-size:10px;color:#36363f;transform:scaleX(1.1123);transform-origin:left top;">11/08/2007</span>
<span class="t" style="left:793.34px;top:485.00px;font-size:10px;color:#36363f;transform:scaleX(1.0000);transform-origin:right top;">7</span>
<span class="t" style="left:811.90px;top:485.00px;font-size:10px;color:#36363f;transform:scaleX(1.0000);transform-origin:left top;">PN</span>
<span class="t" style="left:884.31px;top:485.00px;font-size:10px;color:#36363f;transform:scaleX(1.0500);transform-origin:right top;">True</span>
<span class="t" style="left:131.90px;top:502.00px;font-size:10px;color:#36363f;transform:scaleX(1.0477);transform-origin:left top;">12180</span>
<span class="t" style="left:219.20px;top:502.00px;font-size:10px;color:#36363f;transform:scaleX(1.0022);transform-origin:left top;">ALMOND</span>
<span class="t" style="left:416.20px;top:502.00px;font-size:10px;color:#36363f;transform:scaleX(1.0650);transform-origin:left top;">Michael</span>
<span class="t" style="left:586.50px;top:502.00px;font-size:10px;color:#36363f;transform:scaleX(1.0000);transform-origin:left top;">M</span>
<span class="t" style="left:678.30px;top:502.00px;font-size:10px;color:#36363f;transform:scaleX(1.0958);transform-origin:left top;">25/04/2004</span>
<span class="t" style="left:787.78px;top:502.00px;font-size:10px;color:#36363f;transform:scaleX(1.0000);transform-origin:right top;">10</span>
<span class="t" style="left:811.90px;top:502.00px;font-size:10px;color:#36363f;transform:scaleX(1.0000);transform-origin:left top;">MS</span>
<span class="t" style="left:884.31px;top:502.00px;font-size:10px;color:#36363f;transform:scaleX(1.0500);transform-origin:right top;">True</span>
<div class="r" style="left:113px;top:515px;width:798px;height:17px;background:#f2f2f2;"></div>
<span class="t" style="left:131.90px;top:519.00px;font-size:10px;color:#36363f;transform:scaleX(1.0477);transform-origin:left top;">13180</span>
<span class="t" style="left:219.20px;top:519.00px;font-size:10px;color:#36363f;transform:scaleX(0.9368);transform-origin:left top;">ANDREWS</span>
<span class="t" style="left:416.20px;top:519.00px;font-size:10px;color:#36363f;transform:scaleX(0.9936);transform-origin:left top;">Luke</span>
<span class="t" style="left:586.50px;top:519.00px;font-size:10px;color:#36363f;transform:scaleX(1.0000);transform-origin:left top;">M</span>
<span class="t" style="left:678.30px;top:519.00px;font-size:10px;color:#36363f;transform:scaleX(1.0958);transform-origin:left top;">01/05/2007</span>
<span class="t" style="left:793.34px;top:519.00px;font-size:10px;color:#36363f;transform:scaleX(1.0000);transform-origin:right top;">7</span>
<span class="t" style="left:811.90px;top:519.00px;font-size:10px;color:#36363f;transform:scaleX(1.0000);transform-origin:left top;">PS</span>
<span class="t" style="left:884.31px;top:519.00px;font-size:10px;color:#36363f;transform:scaleX(1.0500);transform-origin:right top;">True</span>
<span class="t" style="left:131.90px;top:536.00px;font-size:10px;color:#36363f;transform:scaleX(1.0477);transform-origin:left top;">12875</span>
<span class="t" style="left:219.20px;top:536.00px;font-size:10px;color:#36363f;transform:scaleX(0.9355);transform-origin:left top;">ANGHEL</span>
<span class="t" style="left:416.20px;top:536.00px;font-size:10px;color:#36363f;transform:scaleX(1.0212);transform-origin:left top;">Gemma</span>
<span class="t" style="left:586.50px;top:536.00px;font-size:10px;color:#36363f;transform:scaleX(1.0000);transform-origin:left top;">F</span>
<span class="t" style="left:678.30px;top:536.00px;font-size:10px;color:#36363f;transform:scaleX(1.0958);transform-origin:left top;">06/07/2006</span>
<span class="t" style="left:793.34px;top:536.00px;font-size:10px;color:#36363f;transform:scaleX(1.0000);transform-origin:right top;">8</span>
<span class="t" style="left:811.90px;top:536.00px;font-size:10px;color:#36363f;transform:scaleX(1.0000);transform-origin:left top;">BN</span>
<span class="t" style="left:884.31px;top:536.00px;font-size:10px;color:#36363f;transform:scaleX(1.0500);transform-origin:right top;">True</span>
<div class="r" style="left:113px;top:549px;width:798px;height:17px;background:#f2f2f2;"></div>
<span class="t" style="left:131.90px;top:553.00px;font-size:10px;color:#36363f;transform:scaleX(1.0765);transform-origin:left top;">11814</span>
<span class="t" style="left:219.20px;top:553.00px;font-size:10px;color:#36363f;transform:scaleX(0.9355);transform-origin:left top;">ANGHEL</span>
<span class="t" style="left:416.20px;top:553.00px;font-size:10px;color:#36363f;transform:scaleX(0.9745);transform-origin:left top;">Joel</span>
<span class="t" style="left:586.50px;top:553.00px;font-size:10px;color:#36363f;transform:scaleX(1.0000);transform-origin:left top;">M</span>
<span class="t" style="left:678.30px;top:553.00px;font-size:10px;color:#36363f;transform:scaleX(1.0958);transform-origin:left top;">03/01/2003</span>
<span class="t" style="left:788.52px;top:553.00px;font-size:10px;color:#36363f;transform:scaleX(1.0000);transform-origin:right top;">11</span>
<span class="t" style="left:811.90px;top:553.00px;font-size:10px;color:#36363f;transform:scaleX(1.0000);transform-origin:left top;">QN</span>
<span class="t" style="left:884.31px;top:553.00px;font-size:10px;color:#36363f;transform:scaleX(1.0500);transform-origin:right top;">True</span>
<span class="t" style="left:131.90px;top:569.00px;font-size:10px;color:#36363f;transform:scaleX(1.0477);transform-origin:left top;">12874</span>
<span class="t" style="left:219.20px;top:569.00px;font-size:10px;color:#36363f;transform:scaleX(1.0195);transform-origin:left top;">APATA</span>
<span class="t" style="left:416.20px;top:569.00px;font-size:10px;color:#36363f;transform:scaleX(1.0208);transform-origin:left top;">Harvey</span>
<span class="t" style="left:586.50px;top:569.00px;font-size:10px;color:#36363f;transform:scaleX(1.0000);transform-origin:left top;">M</span>
<span class="t" style="left:678.30px;top:569.00px;font-size:10px;color:#36363f;transform:scaleX(1.1123);transform-origin:left top;">11/12/2005</span>
<span class="t" style="left:793.34px;top:569.00px;font-size:10px;color:#36363f;transform:scaleX(1.0000);transform-origin:right top;">8</span>
<span class="t" style="left:811.90px;top:569.00px;font-size:10px;color:#36363f;transform:scaleX(1.0000);transform-origin:left top;">ES</span>
<span class="t" style="left:884.31px;top:569.00px;font-size:10px;color:#36363f;transform:scaleX(1.0500);transform-origin:right top;">True</span>
<div class="r" style="left:113px;top:582px;width:798px;height:17px;background:#f2f2f2;"></div>
<span class="t" style="left:131.90px;top:586.00px;font-size:10px;color:#36363f;transform:scaleX(1.0477);transform-origin:left top;">13179</span>
<span class="t" style="left:219.20px;top:586.00px;font-size:10px;color:#36363f;transform:scaleX(0.9504);transform-origin:left top;">APLIN</span>
<span class="t" style="left:416.20px;top:586.00px;font-size:10px;color:#36363f;transform:scaleX(1.0041);transform-origin:left top;">Chloe</span>
<span class="t" style="left:586.50px;top:586.00px;font-size:10px;color:#36363f;transform:scaleX(1.0000);transform-origin:left top;">F</span>
<span class="t" style="left:678.30px;top:586.00px;font-size:10px;color:#36363f;transform:scaleX(1.0958);transform-origin:left top;">10/10/2006</span>
<span class="t" style="left:793.34px;top:586.00px;font-size:10px;color:#36363f;transform:scaleX(1.0000);transform-origin:right top;">7</span>
<span class="t" style="left:811.90px;top:586.00px;font-size:10px;color:#36363f;transform:scaleX(1.0000);transform-origin:left top;">EN</span>
<span class="t" style="left:884.31px;top:586.00px;font-size:10px;color:#36363f;transform:scaleX(1.0500);transform-origin:right top;">True</span>
<span class="t" style="left:131.90px;top:603.00px;font-size:10px;color:#36363f;transform:scaleX(1.0477);transform-origin:left top;">12178</span>
<span class="t" style="left:219.20px;top:603.00px;font-size:10px;color:#36363f;transform:scaleX(0.8849);transform-origin:left top;">APPLEBY</span>
<span class="t" style="left:416.20px;top:603.00px;font-size:10px;color:#36363f;transform:scaleX(1.0101);transform-origin:left top;">George</span>
<span class="t" style="left:586.50px;top:603.00px;font-size:10px;color:#36363f;transform:scaleX(1.0000);transform-origin:left top;">M</span>
<span class="t" style="left:678.30px;top:603.00px;font-size:10px;color:#36363f;transform:scaleX(1.1123);transform-origin:left top;">02/11/2003</span>
<span class="t" style="left:787.78px;top:603.00px;font-size:10px;color:#36363f;transform:scaleX(1.0000);transform-origin:right top;">10</span>
<span class="t" style="left:811.90px;top:603.00px;font-size:10px;color:#36363f;transform:scaleX(1.0000);transform-origin:left top;">QS</span>
<span class="t" style="left:884.31px;top:603.00px;font-size:10px;color:#36363f;transform:scaleX(1.0500);transform-origin:right top;">True</span>
<div class="r" style="left:113px;top:616px;width:798px;height:17px;background:#f2f2f2;"></div>
<span class="t" style="left:131.90px;top:620.00px;font-size:10px;color:#36363f;transform:scaleX(1.0477);transform-origin:left top;">12179</span>
<span class="t" style="left:219.20px;top:620.00px;font-size:10px;color:#36363f;transform:scaleX(0.8849);transform-origin:left top;">APPLEBY</span>
<span class="t" style="left:416.20px;top:620.00px;font-size:10px;color:#36363f;transform:scaleX(1.0140);transform-origin:left top;">Georgia</span>
<span class="t" style="left:586.50px;top:620.00px;font-size:10px;color:#36363f;transform:scaleX(1.0000);transform-origin:left top;">F</span>
<span class="t" style="left:678.30px;top:620.00px;font-size:10px;color:#36363f;transform:scaleX(1.0958);transform-origin:left top;">09/12/2003</span>
<span class="t" style="left:787.78px;top:620.00px;font-size:10px;color:#36363f;transform:scaleX(1.0000);transform-origin:right top;">10</span>
<span class="t" style="left:811.90px;top:620.00px;font-size:10px;color:#36363f;transform:scaleX(1.0000);transform-origin:left top;">MN</span>
<span class="t" style="left:884.31px;top:620.00px;font-size:10px;color:#36363f;transform:scaleX(1.0500);transform-origin:right top;">True</span>
<span class="t" style="left:131.90px;top:637.00px;font-size:10px;color:#36363f;transform:scaleX(1.0477);transform-origin:left top;">13178</span>
<span class="t" style="left:219.20px;top:637.00px;font-size:10px;color:#36363f;transform:scaleX(0.9226);transform-origin:left top;">ASH</span>
<span class="t" style="left:416.20px;top:637.00px;font-size:10px;color:#36363f;transform:scaleX(1.0404);transform-origin:left top;">Henry</span>
<span class="t" style="left:586.50px;top:637.00px;font-size:10px;color:#36363f;transform:scaleX(1.0000);transform-origin:left top;">M</span>
<span class="t" style="left:678.30px;top:637.00px;font-size:10px;color:#36363f;transform:scaleX(1.0958);transform-origin:left top;">29/12/2006</span>
<span class="t" style="left:793.34px;top:637.00px;font-size:10px;color:#36363f;transform:scaleX(1.0000);transform-origin:right top;">7</span>
<span class="t" style="left:811.90px;top:637.00px;font-size:10px;color:#36363f;transform:scaleX(1.0000);transform-origin:left top;">QN</span>
<span class="t" style="left:884.31px;top:637.00px;font-size:10px;color:#36363f;transform:scaleX(1.0500);transform-origin:right top;">True</span>
<div class="r" style="left:113px;top:650px;width:798px;height:17px;background:#f2f2f2;"></div>
<span class="t" style="left:131.90px;top:654.00px;font-size:10px;color:#36363f;transform:scaleX(1.0477);transform-origin:left top;">12873</span>
<span class="t" style="left:219.20px;top:654.00px;font-size:10px;color:#36363f;transform:scaleX(0.9289);transform-origin:left top;">ASHEQUL BARI</span>
<span class="t" style="left:416.20px;top:654.00px;font-size:10px;color:#36363f;transform:scaleX(1.0213);transform-origin:left top;">Hannah</span>
<span class="t" style="left:586.50px;top:654.00px;font-size:10px;color:#36363f;transform:scaleX(1.0000);transform-origin:left top;">F</span>
<span class="t" style="left:678.30px;top:654.00px;font-size:10px;color:#36363f;transform:scaleX(1.0958);transform-origin:left top;">05/10/2005</span>
<span class="t" style="left:793.34px;top:654.00px;font-size:10px;color:#36363f;transform:scaleX(1.0000);transform-origin:right top;">8</span>
<span class="t" style="left:811.90px;top:654.00px;font-size:10px;color:#36363f;transform:scaleX(1.0000);transform-origin:left top;">QN</span>
<span class="t" style="left:884.31px;top:654.00px;font-size:10px;color:#36363f;transform:scaleX(1.0500);transform-origin:right top;">True</span>
<span class="t" style="left:131.90px;top:671.00px;font-size:10px;color:#36363f;transform:scaleX(1.0477);transform-origin:left top;">12535</span>
<span class="t" style="left:219.20px;top:671.00px;font-size:10px;color:#36363f;transform:scaleX(0.9580);transform-origin:left top;">ASHEQUL MUKTADIR</span>
<span class="t" style="left:416.20px;top:671.00px;font-size:10px;color:#36363f;transform:scaleX(1.0065);transform-origin:left top;">Sophie</span>
<span class="t" style="left:586.50px;top:671.00px;font-size:10px;color:#36363f;transform:scaleX(1.0000);transform-origin:left top;">F</span>
<span class="t" style="left:678.30px;top:671.00px;font-size:10px;color:#36363f;transform:scaleX(1.0958);transform-origin:left top;">25/05/2005</span>
<span class="t" style="left:793.34px;top:671.00px;font-size:10px;color:#36363f;transform:scaleX(1.0000);transform-origin:right top;">9</span>
<span class="t" style="left:811.90px;top:671.00px;font-size:10px;color:#36363f;transform:scaleX(1.0000);transform-origin:left top;">QN</span>
<span class="t" style="left:884.31px;top:671.00px;font-size:10px;color:#36363f;transform:scaleX(1.0500);transform-origin:right top;">True</span>
<div class="r" style="left:113px;top:684px;width:798px;height:17px;background:#f2f2f2;"></div>
<span class="t" style="left:131.90px;top:688.00px;font-size:10px;color:#36363f;transform:scaleX(1.0477);transform-origin:left top;">12534</span>
<span class="t" style="left:219.20px;top:688.00px;font-size:10px;color:#36363f;transform:scaleX(0.9400);transform-origin:left top;">ASTON</span>
<span class="t" style="left:416.20px;top:688.00px;font-size:10px;color:#36363f;transform:scaleX(1.0213);transform-origin:left top;">Hannah</span>
<span class="t" style="left:586.50px;top:688.00px;font-size:10px;color:#36363f;transform:scaleX(1.0000);transform-origin:left top;">F</span>
<span class="t" style="left:678.30px;top:688.00px;font-size:10px;color:#36363f;transform:scaleX(1.0958);transform-origin:left top;">25/05/2005</span>
<span class="t" style="left:793.34px;top:688.00px;font-size:10px;color:#36363f;transform:scaleX(1.0000);transform-origin:right top;">9</span>
<span class="t" style="left:811.90px;top:688.00px;font-size:10px;color:#36363f;transform:scaleX(1.0000);transform-origin:left top;">MN</span>
<span class="t" style="left:884.31px;top:688.00px;font-size:10px;color:#36363f;transform:scaleX(1.0500);transform-origin:right top;">True</span>
<span class="t" style="left:131.90px;top:705.00px;font-size:10px;color:#36363f;transform:scaleX(1.0477);transform-origin:left top;">12177</span>
<span class="t" style="left:219.20px;top:705.00px;font-size:10px;color:#36363f;transform:scaleX(0.9503);transform-origin:left top;">ATHERTON</span>
<span class="t" style="left:416.20px;top:705.00px;font-size:10px;color:#36363f;transform:scaleX(1.0140);transform-origin:left top;">Georgia</span>
<span class="t" style="left:586.50px;top:705.00px;font-size:10px;color:#36363f;transform:scaleX(1.0000);transform-origin:left top;">F</span>
<span class="t" style="left:678.30px;top:705.00px;font-size:10px;color:#36363f;transform:scaleX(1.0958);transform-origin:left top;">25/06/2004</span>
<span class="t" style="left:787.78px;top:705.00px;font-size:10px;color:#36363f;transform:scaleX(1.0000);transform-origin:right top;">10</span>
<span class="t" style="left:811.90px;top:705.00px;font-size:10px;color:#36363f;transform:scaleX(1.0000);transform-origin:left top;">BS</span>
<span class="t" style="left:884.31px;top:705.00px;font-size:10px;color:#36363f;transform:scaleX(1.0500);transform-origin:right top;">True</span>
<div class="r" style="left:113px;top:718px;width:798px;height:17px;background:#f2f2f2;"></div>
<span class="t" style="left:131.90px;top:722.00px;font-size:10px;color:#36363f;transform:scaleX(1.0477);transform-origin:left top;">12872</span>
<span class="t" style="left:219.20px;top:722.00px;font-size:10px;color:#36363f;transform:scaleX(0.9455);transform-origin:left top;">ATKINS</span>
<span class="t" style="left:416.20px;top:722.00px;font-size:10px;color:#36363f;transform:scaleX(1.0151);transform-origin:left top;">Alex</span>
<span class="t" style="left:586.50px;top:722.00px;font-size:10px;color:#36363f;transform:scaleX(1.0000);transform-origin:left top;">M</span>
<span class="t" style="left:678.30px;top:722.00px;font-size:10px;color:#36363f;transform:scaleX(1.0958);transform-origin:left top;">16/03/2006</span>
<span class="t" style="left:793.34px;top:722.00px;font-size:10px;color:#36363f;transform:scaleX(1.0000);transform-origin:right top;">8</span>
<span class="t" style="left:811.90px;top:722.00px;font-size:10px;color:#36363f;transform:scaleX(1.0000);transform-origin:left top;">ES</span>
<span class="t" style="left:884.31px;top:722.00px;font-size:10px;color:#36363f;transform:scaleX(1.0500);transform-origin:right top;">True</span>
<span class="t" style="left:131.90px;top:739.00px;font-size:10px;color:#36363f;transform:scaleX(1.0477);transform-origin:left top;">13177</span>
<span class="t" style="left:219.20px;top:739.00px;font-size:10px;color:#36363f;transform:scaleX(0.9573);transform-origin:left top;">ATKINSON</span>
<span class="t" style="left:416.20px;top:739.00px;font-size:10px;color:#36363f;transform:scaleX(1.0171);transform-origin:left top;">Charlie</span>
<span class="t" style="left:586.50px;top:739.00px;font-size:10px;color:#36363f;transform:scaleX(1.0000);transform-origin:left top;">M</span>
<span class="t" style="left:678.30px;top:739.00px;font-size:10px;color:#36363f;transform:scaleX(1.1123);transform-origin:left top;">02/11/2006</span>
<span class="t" style="left:793.34px;top:739.00px;font-size:10px;color:#36363f;transform:scaleX(1.0000);transform-origin:right top;">7</span>
<span class="t" style="left:811.90px;top:739.00px;font-size:10px;color:#36363f;transform:scaleX(1.0000);transform-origin:left top;">BS</span>
<span class="t" style="left:884.31px;top:739.00px;font-size:10px;color:#36363f;transform:scaleX(1.0500);transform-origin:right top;">True</span>
<div class="r" style="left:113px;top:752px;width:798px;height:17px;background:#f2f2f2;"></div>
<span class="t" style="left:131.90px;top:756.00px;font-size:10px;color:#36363f;transform:scaleX(1.0765);transform-origin:left top;">11812</span>
<span class="t" style="left:219.20px;top:756.00px;font-size:10px;color:#36363f;transform:scaleX(0.9573);transform-origin:left top;">ATKINSON</span>
<span class="t" style="left:416.20px;top:756.00px;font-size:10px;color:#36363f;transform:scaleX(1.0140);transform-origin:left top;">Georgia</span>
<span class="t" style="left:586.50px;top:756.00px;font-size:10px;color:#36363f;transform:scaleX(1.0000);transform-origin:left top;">F</span>
<span class="t" style="left:678.30px;top:756.00px;font-size:10px;color:#36363f;transform:scaleX(1.0958);transform-origin:left top;">12/02/2003</span>
<span class="t" style="left:788.52px;top:756.00px;font-size:10px;color:#36363f;transform:scaleX(1.0000);transform-origin:right top;">11</span>
<span class="t" style="left:811.90px;top:756.00px;font-size:10px;color:#36363f;transform:scaleX(1.0000);transform-origin:left top;">BN</span>
<span class="t" style="left:884.31px;top:756.00px;font-size:10px;color:#36363f;transform:scaleX(1.0500);transform-origin:right top;">True</span>
<span class="t" style="left:131.90px;top:773.00px;font-size:10px;color:#36363f;transform:scaleX(1.0765);transform-origin:left top;">11813</span>
<span class="t" style="left:219.20px;top:773.00px;font-size:10px;color:#36363f;transform:scaleX(0.9573);transform-origin:left top;">ATKINSON</span>
<span class="t" style="left:416.20px;top:773.00px;font-size:10px;color:#36363f;transform:scaleX(0.9409);transform-origin:left top;">Jake</span>
<span class="t" style="left:586.50px;top:773.00px;font-size:10px;color:#36363f;transform:scaleX(1.0000);transform-origin:left top;">M</span>
<span class="t" style="left:678.30px;top:773.00px;font-size:10px;color:#36363f;transform:scaleX(1.0958);transform-origin:left top;">29/04/2003</span>
<span class="t" style="left:788.52px;top:773.00px;font-size:10px;color:#36363f;transform:scaleX(1.0000);transform-origin:right top;">11</span>
<span class="t" style="left:811.90px;top:773.00px;font-size:10px;color:#36363f;transform:scaleX(1.0000);transform-origin:left top;">BN</span>
<span class="t" style="left:884.31px;top:773.00px;font-size:10px;color:#36363f;transform:scaleX(1.0500);transform-origin:right top;">True</span>
</body></html>
